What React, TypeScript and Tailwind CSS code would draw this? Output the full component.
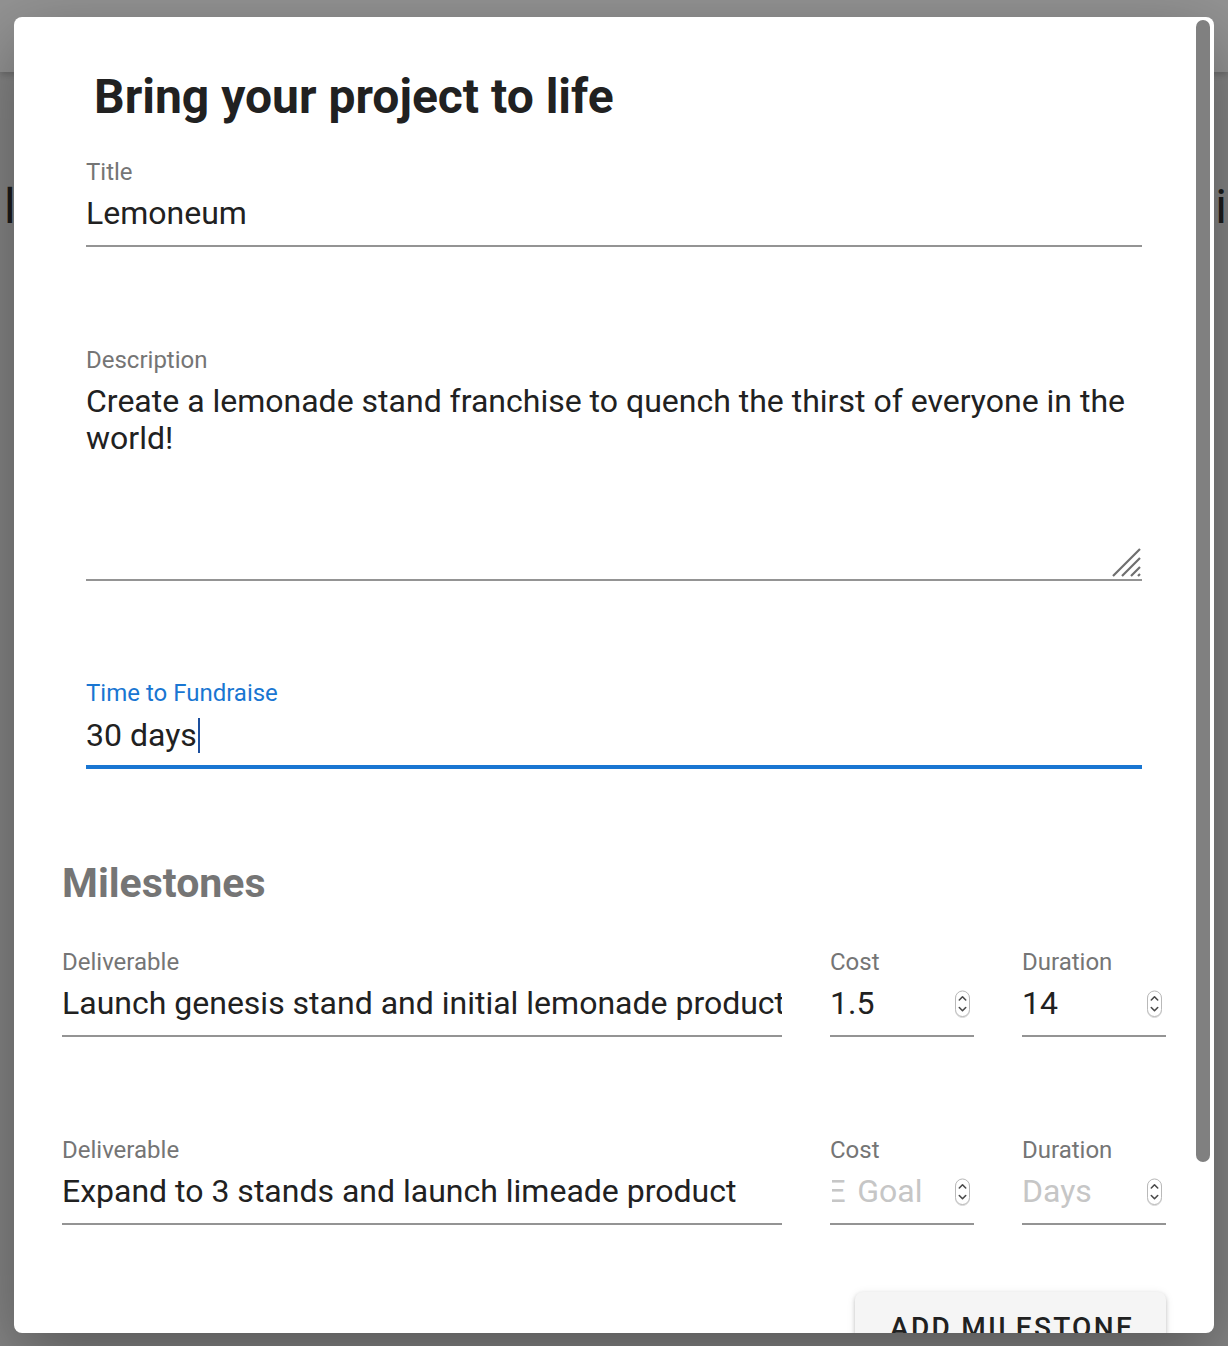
import React from "react";

const FONT = { fontFamily: "Roboto, 'Noto Sans', Arial, sans-serif" };

function Spinner() {
  return (
    <svg width="17" height="28" viewBox="0 0 17 28" className="shrink-0">
      <defs>
        <filter id="spsh" x="-30%" y="-20%" width="160%" height="140%">
          <feDropShadow dx="0" dy="0.6" stdDeviation="0.6" floodColor="#000" floodOpacity="0.25" />
        </filter>
      </defs>
      <rect x="1.5" y="1" width="14" height="25.5" rx="7" fill="#fff" stroke="#b9b9b9" strokeWidth="1" filter="url(#spsh)" />
      <path d="M5.3 10 L8.5 6.8 L11.7 10" fill="none" stroke="#4a4a4a" strokeWidth="1.6" strokeLinecap="round" strokeLinejoin="round" />
      <path d="M5.3 17.5 L8.5 20.7 L11.7 17.5" fill="none" stroke="#4a4a4a" strokeWidth="1.6" strokeLinecap="round" strokeLinejoin="round" />
    </svg>
  );
}

function NumField({ label, value, placeholder, clip }: { label: string; value?: string; placeholder?: string; clip?: boolean }) {
  return (
    <div className="flex flex-col border-b-2 border-[#949494] pb-[13px]">
      <div className="h-[24px] text-[24px] leading-[24px] text-[#757575]">{label}</div>
      <div className="mt-[11px] flex h-[37px] items-center justify-between pr-[3px]">
        {value ? (
          <div className="min-w-0 flex-1 overflow-hidden whitespace-nowrap text-[32px] leading-[37px] text-[#212121]">{value}</div>
        ) : clip ? (
          <div className="ml-[2px] min-w-0 flex-1 overflow-hidden whitespace-nowrap text-[32px] leading-[37px] text-[#c6c6c6]">
            <span className="-ml-[4px]">Ξ</span>
            <span className="ml-[11px]">Goal</span>
          </div>
        ) : (
          <div className="min-w-0 flex-1 overflow-hidden whitespace-nowrap text-[32px] leading-[37px] text-[#c6c6c6]">{placeholder}</div>
        )}
        <Spinner />
      </div>
    </div>
  );
}

function MilestoneRow({ deliverable, cost, duration }: { deliverable: string; cost?: string; duration?: string }) {
  return (
    <div className="flex items-start">
      <div className="flex w-[720px] flex-col border-b-2 border-[#949494] pb-[13px]">
        <div className="h-[24px] text-[24px] leading-[24px] text-[#757575]">Deliverable</div>
        <div className="mt-[11px] h-[37px] overflow-hidden whitespace-nowrap text-[32px] leading-[37px] text-[#212121]">
          {deliverable}
        </div>
      </div>
      <div className="ml-[48px] w-[144px]">
        <NumField label="Cost" value={cost} clip />
      </div>
      <div className="ml-[48px] w-[144px]">
        <NumField label="Duration" value={duration} placeholder="Days" />
      </div>
    </div>
  );
}

export default function App() {
  return (
    <div className="relative h-[1346px] w-[1228px] overflow-hidden bg-[#858585]" style={FONT}>
      {/* background page (dimmed) */}
      <div className="h-[72px] bg-[#939393] shadow-[0_3px_6px_rgba(0,0,0,0.18)]" />
      <div className="flex justify-between pl-[4px] pr-[1px] pt-[107px] text-[48px] leading-[56px] text-[#1b1b1b]">
        <span>l</span>
        <span>i</span>
      </div>

      {/* dialog */}
      <div className="absolute left-[14px] top-[17px] flex h-[1316px] w-[1200px] overflow-hidden rounded-[8px] bg-white shadow-[0_22px_70px_rgba(0,0,0,0.35)]">
        <div className="flex-1 pl-[48px] pr-[30px]">
          <h1 className="pl-[32px] pt-[49px] text-[48px] font-bold leading-[62px] text-[#212121]">
            Bring your project to life
          </h1>

          <div className="px-[24px]">
            {/* Title */}
            <div className="mt-[32px] flex flex-col border-b-2 border-[#949494] pb-[13px]">
              <div className="h-[24px] text-[24px] leading-[24px] text-[#757575]">Title</div>
              <div className="mt-[11px] h-[37px] text-[32px] leading-[37px] text-[#212121]">Lemoneum</div>
            </div>

            {/* Description */}
            <div className="relative mt-[101px] flex flex-col border-b-2 border-[#949494] pb-[13px]">
              <div className="h-[24px] text-[24px] leading-[24px] text-[#757575]">Description</div>
              <div className="mt-[11px] h-[183px] text-[32px] leading-[37px] text-[#212121]">
                Create a lemonade stand franchise to quench the thirst of everyone in the world!
              </div>
              <svg width="30" height="30" viewBox="0 0 30 30" className="absolute bottom-[1px] right-0">
                <path d="M1 28 L28 1 M10 28 L28 10 M19 28 L28 19 M26 28 L28 26" stroke="#6f6f6f" strokeWidth="2.2" />
              </svg>
            </div>

            {/* Time to Fundraise */}
            <div className="mt-[100px] flex flex-col border-b-[4px] border-[#1976d2] pb-[11px]">
              <div className="h-[24px] text-[24px] leading-[24px] text-[#1976d2]">Time to Fundraise</div>
              <div className="mt-[12px] flex h-[37px] items-center text-[32px] leading-[37px] text-[#212121]">
                <span>30 days</span>
                <span className="ml-[1px] inline-block h-[35px] w-[2px] bg-[#1c4f9e]" />
              </div>
            </div>
          </div>

          {/* Milestones */}
          <h2 className="mt-[90px] text-[41px] font-bold leading-[48px] text-[#757575]">Milestones</h2>

          <div className="mt-[43px]">
            <MilestoneRow deliverable="Launch genesis stand and initial lemonade product" cost="1.5" duration="14" />
          </div>
          <div className="mt-[101px]">
            <MilestoneRow deliverable="Expand to 3 stands and launch limeade product" />
          </div>

          <div className="mt-[67px] flex justify-end">
            <button className="h-[72px] rounded-[8px] bg-[#f5f5f5] pl-[35px] pr-[32px] text-[28px] font-medium uppercase tracking-[2.3px] text-[#212121] shadow-[0_2px_4px_rgba(0,0,0,0.2),0_1px_10px_rgba(0,0,0,0.08)]">
              Add Milestone
            </button>
          </div>
        </div>

        {/* scrollbar */}
        <div className="w-[18px] shrink-0 pr-[4px] pt-[3px]">
          <div className="h-[1142px] w-[14px] rounded-full bg-[#808080]" />
        </div>
      </div>
    </div>
  );
}
